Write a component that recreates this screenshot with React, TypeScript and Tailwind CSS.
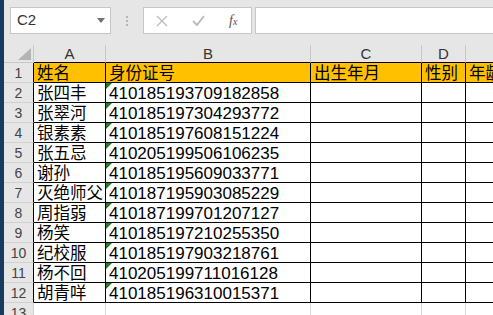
import React from "react";

const rows: [string, string][] = [
  ["张四丰", "410185193709182858"],
  ["张翠河", "410185197304293772"],
  ["银素素", "410185197608151224"],
  ["张五忌", "410205199506106235"],
  ["谢孙", "410185195609033771"],
  ["灭绝师父", "410187195903085229"],
  ["周指弱", "410187199701207127"],
  ["杨笑", "410185197210255350"],
  ["纪校服", "410185197903218761"],
  ["杨不回", "410205199711016128"],
  ["胡青咩", "410185196310015371"],
];

const cjk = { fontFamily: '"Noto Sans CJK SC", "Noto Sans", sans-serif' };
const arial = { fontFamily: '"Liberation Sans", Arial, sans-serif' };

function RowHead({ n, last }: { n: number; last?: boolean }) {
  return (
    <div
      className={`h-[20px] border-b border-r border-b-[#d0d0d0] ${last ? "border-r-[#d0d0d0]" : "border-r-black"} bg-[#e6e6e6] text-[#444] text-[14px] leading-[20px] text-center overflow-hidden`}
      style={arial}
    >
      {n}
    </div>
  );
}

function CnCell({ text, orange, clsx = "" }: { text: string; orange?: boolean; clsx?: string }) {
  return (
    <div
      className={`h-[20px] border-b border-r border-black pl-[3px] whitespace-nowrap ${orange ? "bg-[#ffc000]" : "bg-white"} ${clsx}`}
    >
      <div className="text-[16.5px] leading-[19px] text-black" style={cjk}>
        {text}
      </div>
    </div>
  );
}

function NumCell({ text }: { text: string }) {
  return (
    <div className="relative h-[20px] border-b border-r border-black bg-white pl-[3px] overflow-hidden whitespace-nowrap">
      <div className="absolute left-0 top-0 w-0 h-0 border-t-[6px] border-r-[6px] border-t-[#1f7a1f] border-r-transparent" />
      <div className="text-[17px] leading-[20px] pt-[1px] text-black" style={arial}>
        {text}
      </div>
    </div>
  );
}

function EmptyCell() {
  return <div className="h-[20px] border-b border-r border-black bg-white" />;
}

export default function App() {
  return (
    <div className="flex w-[493px] h-[315px] overflow-hidden bg-[#e6e6e6]">
      <div className="w-[4px] shrink-0 bg-[#173a5e]" />
      <div className="flex flex-col flex-1 min-w-0 overflow-hidden">
        {/* toolbar */}
        <div className="h-[45px] shrink-0 flex items-start pt-[7px] pl-[6px]">
          <div className="shrink-0 w-[101px] h-[27px] bg-white border border-[#c6c6c6] flex items-center justify-between pl-[6px] pr-[5px]">
            <span className="text-[15px] text-[#333]" style={arial}>
              C2
            </span>
            <svg width="8" height="5" viewBox="0 0 8 5">
              <path d="M0 0 L8 0 L4 5 Z" fill="#707070" />
            </svg>
          </div>
          <div className="shrink-0 w-[32px] h-[27px] flex flex-col items-center justify-center gap-[2px]">
            <div className="w-[2px] h-[2px] bg-[#b5b5b5]" />
            <div className="w-[2px] h-[2px] bg-[#b5b5b5]" />
            <div className="w-[2px] h-[2px] bg-[#b5b5b5]" />
          </div>
          <div className="shrink-0 w-[109px] h-[27px] bg-white border border-[#c6c6c6] flex items-center pl-[12px] gap-[24px]">
            <svg width="12" height="12" viewBox="0 0 12 12">
              <path d="M1 1 L11 11 M11 1 L1 11" stroke="#bdbdbd" strokeWidth="1.3" />
            </svg>
            <svg width="13" height="11" viewBox="0 0 13 11">
              <path d="M1 6 L5 10 L12 1" stroke="#bdbdbd" strokeWidth="2" fill="none" />
            </svg>
            <span className="italic text-[14px] text-[#555] leading-none" style={{ fontFamily: '"Liberation Serif", serif' }}>
              f<span className="text-[10px]">x</span>
            </span>
          </div>
          <div className="shrink-0 ml-[3px] w-[300px] h-[27px] bg-white border border-[#c6c6c6]" />
        </div>

        {/* grid */}
        <div className="grid grid-cols-[30px_72px_205px_111px_44px_1fr] bg-white">
          {/* column headers */}
          <div className="h-[18px] bg-[#e6e6e6] border-r border-b border-[#c8c8c8] relative">
            <svg className="absolute right-[2px] bottom-[2px]" width="13" height="12" viewBox="0 0 13 12">
              <path d="M13 0 L13 12 L0 12 Z" fill="#b4b4b4" />
            </svg>
          </div>
          {["A", "B", "C", "D", ""].map((c, i) => (
            <div
              key={i}
              className="h-[18px] bg-[#e6e6e6] border-r border-r-[#c8c8c8] border-b border-b-black text-center text-[15px] leading-[18px] text-[#333]"
              style={arial}
            >
              {c}
            </div>
          ))}

          {/* row 1 */}
          <RowHead n={1} />
          <CnCell text="姓名" orange />
          <CnCell text="身份证号" orange />
          <CnCell text="出生年月" orange />
          <CnCell text="性别" orange />
          <CnCell text="年龄" orange clsx="border-r-0" />

          {rows.map(([name, id], i) => (
            <React.Fragment key={i}>
              <RowHead n={i + 2} />
              <CnCell text={name} />
              <NumCell text={id} />
              <EmptyCell />
              <EmptyCell />
              <div className="h-[20px] border-b border-black bg-white" />
            </React.Fragment>
          ))}

          {/* row 13 */}
          <RowHead n={13} last />
          <div className="h-[20px] border-r border-[#d9d9d9]" />
          <div className="h-[20px] border-r border-[#d9d9d9]" />
          <div className="h-[20px] border-r border-[#d9d9d9]" />
          <div className="h-[20px] border-r border-[#d9d9d9]" />
          <div className="h-[20px]" />
        </div>
      </div>
    </div>
  );
}
